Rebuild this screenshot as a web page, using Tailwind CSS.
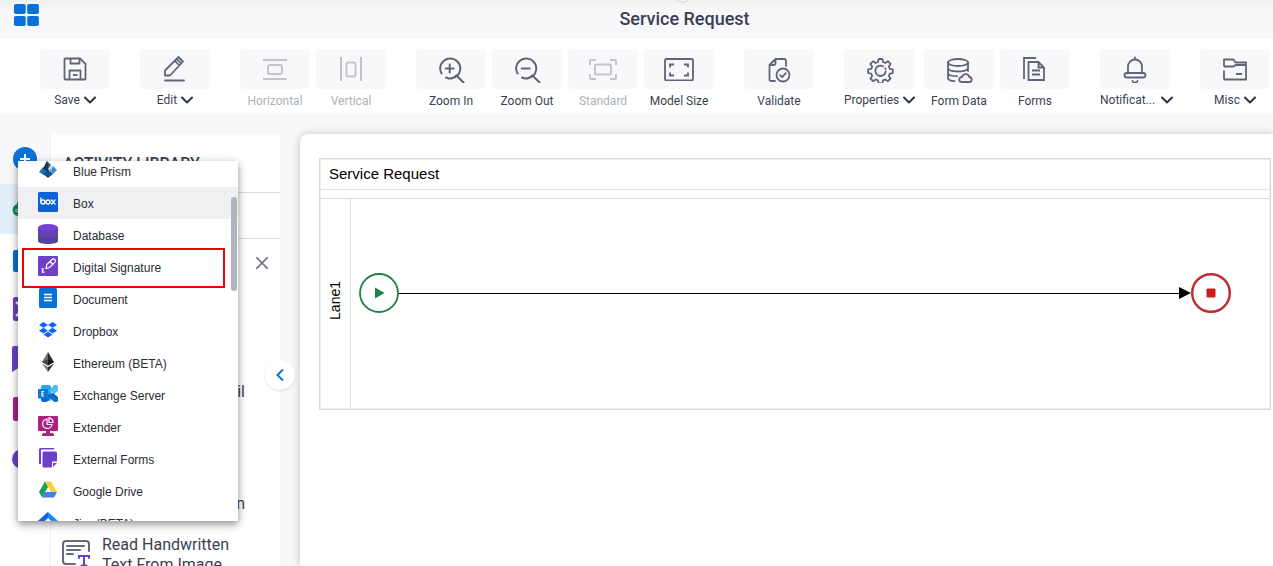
<!DOCTYPE html>
<html lang="en">
<head>
  <meta charset="UTF-8" />
  <meta name="viewport" content="width=device-width, initial-scale=1.0" />
  <title>Service Request</title>
  <script src="https://cdn.jsdelivr.net/npm/@tailwindcss/browser@4"></script>
</head>
<body class="h-screen overflow-hidden flex flex-col bg-[#f8f8fb] text-[#3b3f54] font-['Roboto',sans-serif]">

  <!-- Header -->
  <header class="relative h-[39px] shrink-0 flex items-start pt-[7px] bg-linear-to-b from-[#f1f1f3] to-[#f8f8fb] to-30% overflow-hidden">
    <a href="#" aria-label="Home" class="absolute left-3.5 top-1">
      <svg class="w-[25px] h-[22px]" viewBox="0 0 25 22" fill="#0972d9">
        <rect width="11.7" height="10" rx="1.8"/><rect x="13.2" width="11.7" height="10" rx="1.8"/>
        <rect y="12" width="11.7" height="10" rx="1.8"/><rect x="13.2" y="12" width="11.7" height="10" rx="1.8"/>
      </svg>
    </a>
    <span class="absolute left-[675px] -top-[15px] size-4 rounded-full bg-white shadow"></span>
    <h1 class="w-full pl-24 text-center text-lg font-medium leading-6">Service Request</h1>
  </header>

  <!-- Toolbar -->
  <nav class="h-[75px] shrink-0 flex gap-[30px] pl-10 pt-2.5 bg-white text-xs overflow-hidden">
    <button class="w-[70px] shrink-0 flex flex-col items-center">
      <span class="w-[70px] h-10 rounded bg-[#f8f8fb] flex items-center justify-center">
        <svg class="size-6" viewBox="0 0 24 24" fill="none" stroke="#5f6478" stroke-width="1.8" stroke-linejoin="round"><path d="M2.500 1.500h14.500l5.500 5.500v14.500a1 1 0 0 1-1 1h-19a1 1 0 0 1-1-1v-19a1 1 0 0 1 1-1z"/><path d="M7.500 1.500v5h9v-5M6.500 22.500v-9h11v9M10 18h4.500"/></svg>
      </span>
      <span class="flex items-center gap-1 pt-[3px] leading-4">Save <svg class="w-3 h-2" viewBox="0 0 12 8" fill="none" stroke="#2c3048" stroke-width="2" stroke-linecap="round" stroke-linejoin="round"><path d="M1 1.500l5 5 5-5"/></svg></span>
    </button>
    <button class="w-[70px] shrink-0 flex flex-col items-center">
      <span class="w-[70px] h-10 rounded bg-[#f8f8fb] flex items-center justify-center">
        <svg class="w-6 h-7" viewBox="0 0 24 28" fill="none" stroke="#5f6478" stroke-width="1.8" stroke-linejoin="round" stroke-linecap="round"><path d="M2 20.500v-5L15.500 2l4.500 4.500L7 20.500zM11.800 5.800l4.500 4.500M13.700 3.900l4.500 4.500M2 25.500h19"/></svg>
      </span>
      <span class="flex items-center gap-1 pt-[3px] leading-4">Edit <svg class="w-3 h-2" viewBox="0 0 12 8" fill="none" stroke="#2c3048" stroke-width="2" stroke-linecap="round" stroke-linejoin="round"><path d="M1 1.500l5 5 5-5"/></svg></span>
    </button>

    <div class="flex gap-1.5 shrink-0">
      <button disabled class="w-[70px] flex flex-col items-center text-[#aeb1ba]">
        <span class="w-[70px] h-10 rounded bg-[#f8f8fb] flex items-center justify-center">
          <svg class="w-6 h-6" viewBox="0 0 24 24" fill="none" stroke="#c3c5cd" stroke-width="2"><path d="M0 3h24M0 22h24"/><rect x="5" y="8" width="14" height="9" rx="2"/></svg>
        </span>
        <span class="pt-1 leading-4">Horizontal</span>
      </button>
      <button disabled class="w-[70px] flex flex-col items-center text-[#aeb1ba]">
        <span class="w-[70px] h-10 rounded bg-[#f8f8fb] flex items-center justify-center">
          <svg class="w-6 h-6" viewBox="0 0 24 24" fill="none" stroke="#c3c5cd" stroke-width="2"><path d="M2 0v24M22 0v24"/><rect x="7.500" y="5.500" width="9" height="14" rx="2"/></svg>
        </span>
        <span class="pt-1 leading-4">Vertical</span>
      </button>
    </div>

    <div class="flex gap-1.5 shrink-0">
      <button class="w-[70px] flex flex-col items-center">
        <span class="w-[70px] h-10 rounded bg-[#f8f8fb] flex items-center justify-center">
          <svg class="w-7 h-7" viewBox="0 0 28 28" fill="none" stroke="#5f6478" stroke-width="2" stroke-linecap="round"><path d="M4.600 18.500A10 10 0 1 1 9 22.500M19.500 20.500L26.500 27.500M12.700 9.500v8M8.700 13.500h8M11.500 23.500a10 10 0 0 0 8-3"/></svg>
        </span>
        <span class="pt-1 leading-4">Zoom In</span>
      </button>
      <button class="w-[70px] flex flex-col items-center">
        <span class="w-[70px] h-10 rounded bg-[#f8f8fb] flex items-center justify-center">
          <svg class="w-7 h-7" viewBox="0 0 28 28" fill="none" stroke="#5f6478" stroke-width="2" stroke-linecap="round"><path d="M4.600 18.500A10 10 0 1 1 9 22.500M19.500 20.500L26.500 27.500M8.700 13.500h8M11.500 23.500a10 10 0 0 0 8-3"/></svg>
        </span>
        <span class="pt-1 leading-4">Zoom Out</span>
      </button>
      <button disabled class="w-[70px] flex flex-col items-center text-[#aeb1ba]">
        <span class="w-[70px] h-10 rounded bg-[#f8f8fb] flex items-center justify-center">
          <svg class="w-7 h-6" viewBox="0 0 28 24" fill="none" stroke="#c3c5cd" stroke-width="2"><path d="M1 8V4a1 1 0 0 1 1-1h5M21 3h5a1 1 0 0 1 1 1v4M27 17v4a1 1 0 0 1-1 1h-5M7 22H2a1 1 0 0 1-1-1v-4"/><rect x="6" y="7.500" width="16" height="10" rx="1.500"/></svg>
        </span>
        <span class="pt-1 leading-4">Standard</span>
      </button>
      <button class="w-[70px] flex flex-col items-center">
        <span class="w-[70px] h-10 rounded bg-[#f8f8fb] flex items-center justify-center">
          <svg class="w-[30px] h-6" viewBox="0 0 30 24" fill="none" stroke="#5f6478" stroke-width="1.800"><rect x="1" y="2" width="28" height="21.500" rx="1.500"/><path d="M6 10.500v-3h4M20 7.500h4v3M24 15.500v3h-4M10 18.500H6v-3"/></svg>
        </span>
        <span class="pt-1 leading-4">Model Size</span>
      </button>
    </div>

    <button class="w-[70px] shrink-0 flex flex-col items-center">
      <span class="w-[70px] h-10 rounded bg-[#f8f8fb] flex items-center justify-center">
        <svg class="w-6 h-7" viewBox="0 0 24 28" fill="none" stroke="#5f6478" stroke-width="1.800" stroke-linecap="round" stroke-linejoin="round"><path d="M8 26H4a1.500 1.500 0 0 1-1.500-1.500V10l6-6H17a2 2 0 0 1 2 2v5M2.500 10h4a2 2 0 0 0 2-2V4"/><circle cx="16" cy="20" r="6.500"/><path d="M13.200 20.200l2 2 3.600-4"/></svg>
      </span>
      <span class="pt-1 leading-4">Validate</span>
    </button>

    <div class="flex gap-1.5 shrink-0">
      <button class="w-[74px] flex flex-col items-start">
        <span class="w-[71px] h-10 rounded bg-[#f8f8fb] flex items-center justify-center">
          <svg class="w-7 h-7" viewBox="0 0 28 28" fill="none" stroke="#5f6478" stroke-width="1.800" stroke-linecap="round" stroke-linejoin="round"><g transform="translate(.5 1.500)"><path d="M12.100 2.500h3.800l.6 3 2.300 1 2.600-1.800 2.700 2.700-1.800 2.600 1 2.300 3 .5v3.800l-3 .5-1 2.400 1.800 2.500-2.700 2.700-2.600-1.700-2.300.9-.6 3h-3.800l-.6-3-2.300-.9-2.600 1.700-2.700-2.700 1.800-2.500-1-2.400-3-.5v-3.800l3-.5 1-2.300-1.800-2.600 2.700-2.700 2.600 1.800 2.300-1z"/><path d="M16.500 9.700a5.200 5.200 0 1 0 2.700 5.200M19 12.500l-.3-.6"/></g></svg>
        </span>
        <span class="flex items-center gap-1 pt-[3px] leading-4">Properties <svg class="w-3 h-2" viewBox="0 0 12 8" fill="none" stroke="#2c3048" stroke-width="2" stroke-linecap="round" stroke-linejoin="round"><path d="M1 1.500l5 5 5-5"/></svg></span>
      </button>
      <button class="w-[70px] flex flex-col items-center">
        <span class="w-[70px] h-10 rounded bg-[#f8f8fb] flex items-center justify-center">
          <svg class="w-7 h-7" viewBox="0 0 28 28" fill="none" stroke="#5f6478" stroke-width="1.800" stroke-linecap="round" stroke-linejoin="round"><g transform="translate(0 1)"><ellipse cx="13" cy="6.500" rx="10" ry="3.500"/><path d="M3 6.500V22c0 1.800 2.500 2.900 6.500 3.200M23 6.500V15M3 12c0 4.300 16 4.700 20 .8M3 17c0 2 3.600 3.200 9 3.200M16.500 26h7.500a2.500 2.500 0 0 0 .3-5 3.700 3.700 0 0 0-7.200 0 2.500 2.500 0 0 0-.6 5z"/></g></svg>
        </span>
        <span class="pt-1 leading-4">Form Data</span>
      </button>
      <button class="w-[70px] flex flex-col items-center">
        <span class="w-[70px] h-10 rounded bg-[#f8f8fb] flex items-center justify-center">
          <svg class="w-6 h-6" viewBox="0 0 24 24" fill="none" stroke="#5f6478" stroke-width="1.800"><path d="M1 22V1h12"/><path d="M5.500 5h10l5.500 5.500V23H5.500zM15.500 5v5.500H21M9 13.500h8M9 17.500h8"/></svg>
        </span>
        <span class="pt-1 leading-4">Forms</span>
      </button>
    </div>

    <button class="w-[70px] shrink-0 flex flex-col items-start">
      <span class="w-[70px] h-10 rounded bg-[#f8f8fb] flex items-center justify-center">
        <svg class="w-6 h-7" viewBox="0 0 24 28" fill="none" stroke="#5f6478" stroke-width="1.800" stroke-linecap="round"><path d="M5 18.500v-7a7 7 0 0 1 14 0v7M12 2.500V4M9.500 26a2.700 2.700 0 0 0 5 0"/><rect x="1.500" y="18" width="21" height="4.500" rx="2.200"/></svg>
      </span>
      <span class="flex items-center gap-1.5 pt-[3px] leading-4">Notificat... <svg class="w-3 h-2 shrink-0" viewBox="0 0 12 8" fill="none" stroke="#2c3048" stroke-width="2" stroke-linecap="round" stroke-linejoin="round"><path d="M1 1.500l5 5 5-5"/></svg></span>
    </button>
    <button class="w-[70px] shrink-0 flex flex-col items-center">
      <span class="w-[70px] h-10 rounded bg-[#f8f8fb] flex items-center justify-center">
        <svg class="w-6 h-6" viewBox="0 0 24 24" fill="none" stroke="#5f6478" stroke-width="1.800" stroke-linejoin="round"><path d="M1 9.500V2.500h9.500l2 3H23v17H2a1 1 0 0 1-1-1v-8M1 9.500h9.500l2-1.500H23M13 17h6"/></svg>
      </span>
      <span class="flex items-center gap-1 pt-[3px] leading-4">Misc <svg class="w-3 h-2" viewBox="0 0 12 8" fill="none" stroke="#2c3048" stroke-width="2" stroke-linecap="round" stroke-linejoin="round"><path d="M1 1.500l5 5 5-5"/></svg></span>
    </button>
  </nav>

  <main class="relative flex-1 min-h-0 flex pt-5">
    <!-- Category rail -->
    <aside class="w-[50px] shrink-0 flex flex-col bg-white">
      <button aria-label="Add" class="h-[50px] shrink-0 flex items-center justify-center bg-[#f8f8fb]">
        <svg class="size-6" viewBox="0 0 24 24"><circle cx="12" cy="12" r="12" fill="#0972d9"/><path d="M12 7v10M7 12h10" stroke="#fff" stroke-width="2"/></svg>
      </button>
      <button aria-label="Cloud" class="h-[50px] shrink-0 flex items-center justify-center bg-[#e3f0fa]">
        <svg class="size-[26px]" viewBox="0 0 26 26"><path d="M6 20a6 6 0 0 1-1.500-11.600A8 8 0 0 1 20 8a6 6 0 0 1 0 12z" fill="#1d8060"/><circle cx="5" cy="14.500" r="1.300" fill="none" stroke="#cfe8df" stroke-width=".8"/></svg>
      </button>
      <button aria-label="Documents" class="h-[50px] shrink-0 flex items-center justify-center pt-1"><span class="w-6 h-[22px] rounded-xs bg-[#0972d9]"></span></button>
      <button aria-label="Integrations" class="h-[50px] shrink-0 flex items-center justify-center">
        <svg class="size-6" viewBox="0 0 24 24"><rect width="24" height="24" rx="2" fill="#6e40c9"/><path d="M3 5l3 3M3 19l3-3" stroke="#fff" stroke-width="2"/></svg>
      </button>
      <button aria-label="Bookmarks" class="h-[50px] shrink-0 flex items-center justify-center">
        <svg class="size-[26px]" viewBox="0 0 26 26"><path d="M0 2a2 2 0 0 1 2-2h22a2 2 0 0 1 2 2v24L13 18 0 26z" fill="#6e40c9"/></svg>
      </button>
      <button aria-label="Reports" class="h-[50px] shrink-0 flex items-center justify-center"><span class="size-6 rounded-xs bg-[#ae2084]"></span></button>
      <button aria-label="More" class="h-[50px] shrink-0 flex items-center justify-center"><span class="w-[26px] h-5 rounded-full bg-[#6e40c9]"></span></button>
    </aside>

    <!-- Activity library -->
    <section class="relative w-[230px] shrink-0 bg-white border-l border-[#f2f2f5] text-base leading-5">
      <div class="h-[59px] pl-3 pt-5 border-b border-[#d8dae2] overflow-hidden">
        <h2 class="font-medium whitespace-nowrap">ACTIVITY LIBRARY</h2>
      </div>
      <div class="h-[46px] border-b border-[#d8dae2]"></div>
      <div class="h-12 flex items-center justify-end pr-3">
        <button aria-label="Close">
          <svg class="size-3" viewBox="0 0 12 12" fill="none" stroke="#777b8a" stroke-width="1.800"><path d="M0 0l12 12M12 0L0 12"/></svg>
        </button>
      </div>
      <ul>
        <li class="h-[115px] pt-[95px] pl-[51px]"><p class="w-[143px] text-right">Send Email</p></li>
        <li class="h-28 pt-[92px] pl-[51px]"><p class="w-[143px] text-right">Recognition</p></li>
        <li class="flex gap-3 pl-[11px] pt-[21px]">
          <svg class="w-7 h-7 mt-1 shrink-0" viewBox="0 0 28 28" fill="none" stroke="#656a7d" stroke-width="2" stroke-linecap="round"><path d="M13 25H4M1 22V5a3 3 0 0 1 3-3h20a3 3 0 0 1 3 3v7M5 7h17M5 11h13M5 15h6M1 22a3 3 0 0 0 3 3"/><path d="M17 19v-2h10v2M22 17v9M19.500 26.500h5" stroke="#6e40c9"/></svg>
          <p>Read Handwritten<br>Text From Image</p>
        </li>
      </ul>
      <button aria-label="Collapse panel" class="absolute z-10 -right-[15px] top-[226px] size-[30px] rounded-full bg-white shadow flex items-center justify-center">
        <svg class="w-2 h-3" viewBox="0 0 8 12" fill="none" stroke="#0972d9" stroke-width="2"><path d="M7 .5L1.500 6 7 11.500"/></svg>
      </button>
    </section>

    <!-- Process canvas -->
    <section class="flex-1 min-w-0 ml-5 pl-[19px] pr-0.5 pt-6 bg-white rounded-tl-lg shadow-[0_0_10px_rgba(0,0,0,0.2)] text-black font-['Liberation_Sans',sans-serif]">
      <div class="border border-[#d9d9d9] shadow-[inset_0_0_0_1px_#efefef]">
        <h2 class="h-[31px] flex items-center pl-[9px] text-[15px] border-b border-[#e2e2e2]">Service Request</h2>
        <div class="h-[9px] border-b border-[#d9d9d9]"></div>
        <div class="h-[210px] flex">
          <div class="w-[31px] flex items-center justify-center pb-2 border-r border-[#dedede]">
            <span class="[writing-mode:vertical-rl] rotate-180 text-sm">Lane1</span>
          </div>
          <div class="flex-1 flex items-center pl-2 pr-[39px] pb-[22px]">
            <svg class="size-10 shrink-0" viewBox="0 0 40 40"><circle cx="20" cy="20" r="19" fill="#fff" stroke="#1e8245" stroke-width="1.800"/><path d="M16 14.500l9.500 5.500-9.500 5.500z" fill="#1e8245"/></svg>
            <div class="flex-1 h-px bg-black"></div>
            <svg class="w-3 h-3 shrink-0" viewBox="0 0 12 12"><path d="M0 0l12 6-12 6z"/></svg>
            <svg class="size-10 shrink-0" viewBox="0 0 40 40"><circle cx="20" cy="20" r="18.800" fill="#fff" stroke="#bd2c31" stroke-width="2.400"/><rect x="15.500" y="15.500" width="9" height="9" rx="1" fill="#c91c1c"/></svg>
          </div>
        </div>
      </div>
    </section>

    <!-- Connector menu, scrolled a few pixels down -->
    <div class="absolute z-20 left-[18px] top-[47px] w-[220px] h-[360px] bg-white overflow-hidden shadow-[0_3px_8px_rgba(0,0,0,0.45)] text-xs text-[#2b2b33] font-['Liberation_Sans',sans-serif]">
      <ul class="-mt-1.5">
        <li><button class="w-full h-8 flex items-center gap-[15px] pl-5 pt-0.5">
          <svg class="size-5 -mt-1" viewBox="0 0 20 20"><path d="M9 1l4 4-3 4-5 0z" fill="#1d5d94"/><path d="M5 7l5 4-4 4-5-3z" fill="#1f6fa8"/><path d="M15 6l4 4-4 4-4-4z" fill="#3f8fc9"/><path d="M10 10l5 4-5 4-5-4z" fill="#12528c"/><path d="M9 1l-4 8 6 3z" fill="#1d3557"/><path d="M12 7l3-1-2 5z" fill="#a9d4ef"/></svg>Blue Prism</button></li>
        <li><button class="w-full h-8 flex items-center gap-[15px] pl-5 pt-0.5 bg-[#f0f0f2]">
          <svg class="size-5 -mt-1" viewBox="0 0 20 20"><rect width="20" height="20" rx="1.500" fill="#0a62d8"/><g fill="none" stroke="#fff" stroke-width="1.400" stroke-linecap="round"><path d="M3 6v4M13.500 8l3.500 4M17 8l-3.500 4"/><circle cx="5" cy="10" r="2"/><circle cx="10" cy="10" r="2"/></g></svg>Box</button></li>
        <li><button class="w-full h-8 flex items-center gap-[15px] pl-5 pt-0.5">
          <svg class="size-5 -mt-1" viewBox="0 0 20 20"><path d="M0 3v14c0 4 20 4 20 0V3z" fill="#54429a"/><path d="M0 3v8c0 3.500 20 3.500 20 0V3z" fill="#6340b4"/><ellipse cx="10" cy="3.500" rx="10" ry="3.500" fill="#7443d0"/></svg>Database</button></li>
        <li class="relative"><button class="w-full h-8 flex items-center gap-[15px] pl-5 pt-0.5">
          <svg class="size-5 -mt-1" viewBox="0 0 20 20"><rect width="20" height="20" rx="1" fill="#6e40c9"/><path d="M8 12.500l.8-4L14 3.500a1.800 1.800 0 0 1 2.800 2.800L11.500 11.500zM12 5.500l2.800 2.800M3.500 13c2-1 2 .8 1 2s.5 2 2 .8" fill="none" stroke="#fff" stroke-width="1.200"/></svg>Digital Signature</button>
          <span class="absolute left-1 -top-[3px] w-[203px] h-10 border-2 border-[#f00000]"></span></li>
        <li><button class="w-full h-8 flex items-center gap-[15px] pl-5 pt-0.5">
          <svg class="size-5 -mt-1" viewBox="0 0 20 20"><rect x="1" width="18" height="20" rx="1.500" fill="#0972d9"/><path d="M6 6.500h8M6 9.500h8M6 12.500h8" stroke="#fff" stroke-width="1.300"/></svg>Document</button></li>
        <li><button class="w-full h-8 flex items-center gap-[15px] pl-5 pt-0.5">
          <svg class="size-5 -mt-1" viewBox="0 0 20 20" fill="#0a66fb"><path d="M5.500 2L10 4.900 5.500 7.800 1 4.900zM14.500 2L19 4.900l-4.500 2.900L10 4.900zM5.500 7.800L10 10.700l-4.500 2.900L1 10.700zM14.500 7.800l4.500 2.900-4.500 2.900-4.500-2.900zM10 11.700l4.500 2.900L10 17.500l-4.500-2.900z"/></svg>Dropbox</button></li>
        <li><button class="w-full h-8 flex items-center gap-[15px] pl-5 pt-0.5">
          <svg class="size-5 -mt-1" viewBox="0 0 20 20"><path d="M10 0L4 10l6 3.500z" fill="#707070"/><path d="M10 0l6 10-6 3.500z" fill="#2d2d2d"/><path d="M4 10l6-2.700V13.500z" fill="#444"/><path d="M16 10l-6-2.700V13.500z" fill="#141414"/><path d="M4 11.500l6 3.500v5z" fill="#777"/><path d="M16 11.500L10 15v5z" fill="#333"/></svg>Ethereum (BETA)</button></li>
        <li><button class="w-full h-8 flex items-center gap-[15px] pl-5 pt-0.5">
          <svg class="size-5 -mt-1" viewBox="0 0 20 20"><rect x="3" y="1" width="10" height="16" rx="2" fill="#2aa5e8"/><path d="M11 7l4-5q1-1 2-1h1.500Q20 1 20 2.500V6q0 1-1 1.700L16 10z" fill="#4fc0f2"/><path d="M3 10h8l4-1 4 3q1 1 1 2v2.500q0 1.500-1.500 1.500H17q-1 0-2-1l-3-3-2 3q-1 1-2 1H5q-2 0-2-2z" fill="#0f6cc9"/><rect y="5" width="10" height="9.500" rx="1" fill="#0c7bd4"/><path d="M6 7.500H4v4.500h2M4 9.800h1.800" fill="none" stroke="#fff" stroke-width="1.100"/></svg>Exchange Server</button></li>
        <li><button class="w-full h-8 flex items-center gap-[15px] pl-5 pt-0.5">
          <svg class="size-5 -mt-1" viewBox="0 0 20 20"><path d="M1 0h18a1 1 0 0 1 1 1v13a1 1 0 0 1-1 1h-7v2h2a2 2 0 0 1 2 2v1H4v-1a2 2 0 0 1 2-2h2v-2H1a1 1 0 0 1-1-1V1a1 1 0 0 1 1-1z" fill="#ae2084"/><path d="M9 3a4.700 4.700 0 1 0 5 5.500H9zM11 1.800V6.500h4A4.600 4.600 0 0 0 11 1.800z" fill="none" stroke="#fff" stroke-width="1.200"/></svg>Extender</button></li>
        <li><button class="w-full h-8 flex items-center gap-[15px] pl-5 pt-0.5">
          <svg class="size-5 -mt-1" viewBox="0 0 20 20" fill="#6e40c9"><path d="M2.500 0H16v1.500H3V16H1V1.500Q1 0 2.500 0z"/><path d="M6 3.500h11q2 0 2 1.500v8.500h-5v6H6q-1.500 0-1.500-1.500V5q0-1.500 1.500-1.500zM15 15h4l-4 4z"/></svg>External Forms</button></li>
        <li><button class="w-full h-8 flex items-center gap-[15px] pl-5 pt-0.5">
          <svg class="size-5 -mt-1" viewBox="0 0 20 20"><path d="M7 1.500h6l6 10.500h-6z" fill="#fccd3d"/><path d="M7 1.500L1 12l3 5.500L10 7z" fill="#1f9e5a"/><path d="M7 12h12l-3 5.500H4z" fill="#3f7ff0"/></svg>Google Drive</button></li>
        <li><button class="w-full h-8 flex items-center gap-[15px] pl-5 pt-0.5">
          <svg class="size-5 -mt-1" viewBox="0 0 20 20"><path d="M10 0l10 9-10 10L0 9z" fill="#2581fb"/><path d="M10 6l3 3-3 3-3-3z" fill="#fff"/><path d="M10 0v6L5 10 0 9z" fill="#1763d6"/></svg>Jira (BETA)</button></li>
      </ul>
      <span class="absolute right-[1px] top-9 w-1.5 h-[94px] rounded-full bg-[#b0b4be]"></span>
    </div>
  </main>

</body>
</html>
